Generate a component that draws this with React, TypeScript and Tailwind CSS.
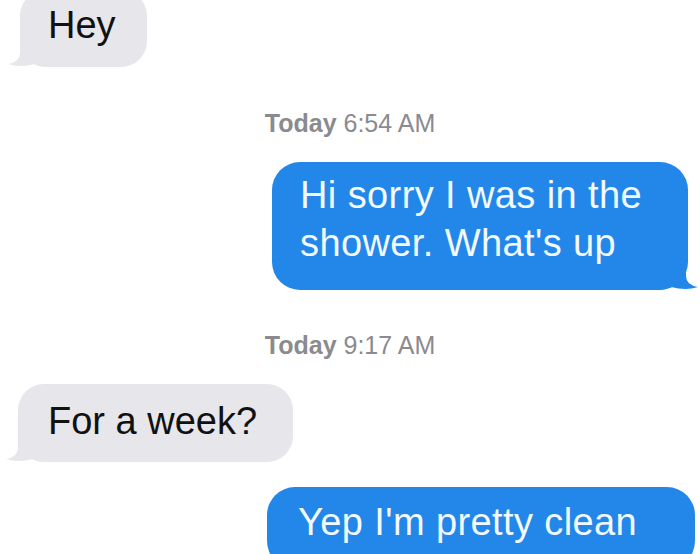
import React from "react";

const font = { fontFamily: '"Liberation Sans", Arial, Helvetica, sans-serif' };

const GrayTail = () => (
  <svg
    className="absolute left-[-13px] bottom-0"
    width="42"
    height="36"
    viewBox="0 0 42 36"
  >
    <path
      d="M13 4 L13 22 Q13 31 1 33 Q13 37 28 33 Q34 36 42 36 L42 4 Z"
      fill="#e6e6eb"
    />
  </svg>
);

const BlueTail = () => (
  <svg
    className="absolute right-[-11px] bottom-0"
    width="42"
    height="36"
    viewBox="0 0 42 36"
  >
    <path
      d="M29 4 L29 22 Q29 31 41 33 Q29 37 14 33 Q8 36 0 36 L0 4 Z"
      fill="#2387ea"
    />
  </svg>
);

const Stamp = ({ time, className }: { time: string; className: string }) => (
  <div
    className={`text-center text-[25px] leading-[30px] text-[#8a8a8f] ${className}`}
    style={font}
  >
    <span className="font-semibold">Today</span> {time}
  </div>
);

const App = () => {
  return (
    <div
      className="w-[700px] h-[554px] overflow-hidden bg-white flex flex-col"
      style={font}
    >
      <div className="self-start relative ml-[20px] mt-[-10px] rounded-[26px] bg-[#e6e6eb] pl-[28px] pr-[31px] pt-[12px] pb-[19px] text-[38px] leading-[46px] text-[#111]">
        <GrayTail />
        <span className="relative">Hey</span>
      </div>

      <Stamp time="6:54 AM" className="mt-[41px]" />

      <div className="self-end relative mr-[12px] mt-[24px] w-[416px] rounded-[28px] bg-[#2387ea] pl-[28px] pr-[20px] pt-[9px] pb-[23px] text-[38px] leading-[48px] tracking-[0.4px] text-[#f2f9ff]">
        <BlueTail />
        <span className="relative">
          Hi sorry I was in the
          <br />
          shower. What's up
        </span>
      </div>

      <Stamp time="9:17 AM" className="mt-[40px]" />

      <div className="self-start relative ml-[18px] mt-[24px] rounded-[26px] bg-[#e6e6eb] pl-[30px] pr-[36px] pt-[14px] pb-[18px] text-[38px] leading-[46px] text-[#111]">
        <GrayTail />
        <span className="relative">For a week?</span>
      </div>

      <div className="self-end relative mr-[5px] mt-[25px] w-[428px] shrink-0 rounded-[28px] bg-[#2387ea] pl-[31px] pr-[20px] pt-[12px] pb-[24px] text-[38px] leading-[46px] tracking-[0.4px] text-[#f2f9ff]">
        <span className="relative">Yep I'm pretty clean</span>
      </div>
    </div>
  );
};

export default App;
